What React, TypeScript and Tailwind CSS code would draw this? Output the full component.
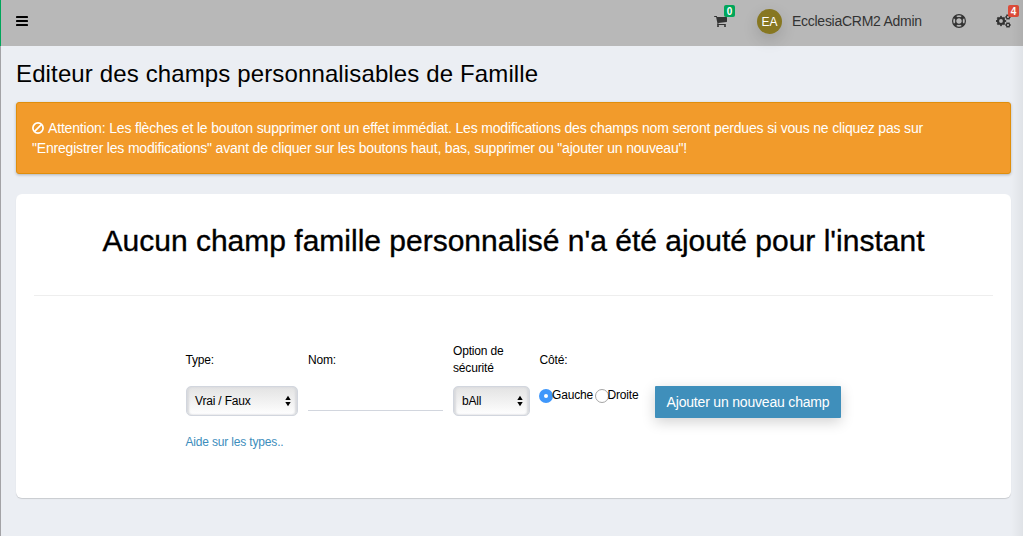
import React from "react";

function Select({ label, className }: { label: string; className: string }) {
  return (
    <button
      type="button"
      className={`flex h-[30px] items-center justify-between rounded-[5px] border border-[#d2d6de] bg-linear-to-b from-[#e3e3e3] to-white pr-[6px] pl-2 text-xs tracking-[-0.18px] text-black shadow-[inset_2px_0_2px_#d8dadd,inset_-2px_0_2px_#d8dadd] ${className}`}
    >
      <span>{label}</span>
      <svg width="6" height="12" viewBox="0 0 6 12" fill="#000">
        <path d="M3 .8 5.7 5H.3zM3 11.2.3 7h5.4z" />
      </svg>
    </button>
  );
}

function Radio({ label, checked, className }: { label: string; checked?: boolean; className: string }) {
  return (
    <label className="flex items-start text-xs leading-[17px]">
      <span
        className={`mt-[3px] flex size-[14px] shrink-0 items-center justify-center rounded-full ${
          checked ? "bg-[#3f97fb]" : "border border-[#a5a5a5] bg-white"
        }`}
      >
        {checked && <span className="size-1 rounded-full bg-white" />}
      </span>
      <span className={className}>{label}</span>
    </label>
  );
}

function Bars() {
  return (
    <svg width="12" height="10" viewBox="0 0 12 10" fill="#000">
      <rect width="12" height="2" rx=".4" />
      <rect y="4" width="12" height="2" rx=".4" />
      <rect y="8" width="12" height="2" rx=".4" />
    </svg>
  );
}

function Cart() {
  return (
    <svg width="14" height="14" viewBox="0 0 1792 1792" fill="currentColor">
      <path d="M640 1536q0 52-38 90t-90 38-90-38-38-90 38-90 90-38 90 38 38 90zm896 0q0 52-38 90t-90 38-90-38-38-90 38-90 90-38 90 38 38 90zm128-1088v512q0 24-16.5 42.5t-40.5 21.5l-1044 122q13 60 13 70 0 16-24 64h920q26 0 45 19t19 45-19 45-45 19h-1024q-26 0-45-19t-19-45q0-11 8-31.5t16-36 21.5-40 15.5-29.5l-177-823h-204q-26 0-45-19t-19-45 19-45 45-19h256q16 0 28.5 6.5t19.5 15.5 13 24.5 8 26 5.5 29.5 4.5 26h1201q26 0 45 19t19 45z" />
    </svg>
  );
}

function LifeRing() {
  return (
    <svg width="14" height="14" viewBox="0 0 14 14" fill="none" stroke="#333">
      <circle cx="7" cy="7" r="6.4" strokeWidth="1.2" />
      <circle cx="7" cy="7" r="3.3" strokeWidth="1.2" />
      <path d="m2.6 2.6 2.2 2.2M11.4 2.6 9.2 4.8M2.6 11.4l2.2-2.2M11.4 11.4 9.2 9.2" strokeWidth="3.2" />
    </svg>
  );
}

function Cogs() {
  return (
    <svg width="15" height="14" viewBox="0 0 15 14" fill="none" stroke="#333">
      <circle cx="5" cy="7" r="3" strokeWidth="2.2" />
      <circle cx="5" cy="7" r="4.4" strokeWidth="1.6" pathLength="16" strokeDasharray="1 1" strokeDashoffset=".5" />
      <circle cx="12" cy="3" r="1.7" strokeWidth="1.2" />
      <circle cx="12" cy="3" r="2.5" strokeWidth="1" pathLength="12" strokeDasharray="1 1" strokeDashoffset=".5" />
      <circle cx="12" cy="11" r="1.7" strokeWidth="1.2" />
      <circle cx="12" cy="11" r="2.5" strokeWidth="1" pathLength="12" strokeDasharray="1 1" strokeDashoffset=".5" />
    </svg>
  );
}

export default function App() {
  return (
    <div className="relative flex h-[536px] w-[1023px] overflow-hidden bg-[#ebeef3] font-['Liberation_Sans',Arial,sans-serif] text-black">
      <div className="flex w-px flex-col">
        <div className="h-[46px] bg-[#00a65a]" />
        <div className="flex-1 bg-[#a3a3a6]" />
      </div>
      <div className="flex flex-1 flex-col">
        <header className="flex h-[46px] items-center bg-[#b8b8b8] pb-1 pl-[15px] text-[#333]">
          <Bars />
          <div className="relative ml-auto">
            <Cart />
            <span className="absolute -top-[9px] left-[10px] flex h-3 w-[11px] items-center justify-center rounded-[2px] bg-[#00a65a] text-[10px] font-bold text-white">0</span>
          </div>
          <div className="mt-px ml-[29px] flex size-[25px] items-center justify-center rounded-full bg-[#877721] text-xs text-white shadow-[0_6px_16px_rgba(0,0,0,0.14)]">EA</div>
          <span className="ml-[10px] w-[131px] text-sm tracking-[-0.27px] whitespace-nowrap">EcclesiaCRM2 Admin</span>
          <div className="ml-[29px]"><LifeRing /></div>
          <div className="relative mr-[12px] ml-[30px]">
            <Cogs />
            <span className="absolute -top-[9px] left-[12px] flex h-3 w-[11px] items-center justify-center rounded-[2px] bg-[#dd4b39] text-[10px] font-bold text-white">4</span>
          </div>
        </header>
        <main className="flex flex-col pr-3 pl-[15px]">
          <h1 className="mt-[14px] h-[42px] text-2xl leading-7 tracking-[0.13px]">Editeur des champs personnalisables de Famille</h1>
          <div className="h-[72px] rounded-[3px] border border-[#e08e0b] bg-[#f29b2b] px-[15px] pt-[15px] text-sm leading-5 tracking-[-0.17px] whitespace-nowrap text-white shadow-[0_1px_3px_rgba(0,0,0,0.25)]">
            <div className="flex items-center">
              <svg className="mr-1" width="12" height="12" viewBox="0 0 12 12" fill="none" stroke="#fff" strokeWidth="1.7">
                <circle cx="6" cy="6" r="5.1" />
                <path d="m2.4 9.6 7.2-7.2" />
              </svg>
              <span>Attention: Les flèches et le bouton supprimer ont un effet immédiat. Les modifications des champs nom seront perdues si vous ne cliquez pas sur</span>
            </div>
            <div className="tracking-[-0.19px]">"Enregistrer les modifications" avant de cliquer sur les boutons haut, bas, supprimer ou "ajouter un nouveau"!</div>
          </div>
          <section className="mt-5 h-[304px] rounded-md bg-white px-[18px] shadow-[0_1px_1px_rgba(0,0,0,0.15)]">
            <h2 className="flex h-[102px] justify-center border-b border-[#eee] pt-[29px] text-[30px] leading-9 whitespace-nowrap [-webkit-text-stroke:0.35px_black]">Aucun champ famille personnalisé n'a été ajouté pour l'instant</h2>
            <form className="mt-[46px] ml-[152px] grid grid-cols-[122px_145px_86px_116px_186px] grid-rows-[44px_48px_20px] text-xs leading-[17px] tracking-[-0.17px]">
              <label className="-ml-[0.5px] pt-[10px]">Type:</label>
              <label className="pt-[10px]">Nom:</label>
              <label className="w-16 pt-px">Option de sécurité</label>
              <span className="pt-[10px] pl-[0.5px]">Côté:</span>
              <span />
              <Select label="Vrai / Faux" className="w-28" />
              <input aria-label="Nom" className="h-[25px] w-[135px] border-b border-[#d2d6de] outline-none" />
              <Select label="bAll" className="w-[77px]" />
              <div className="flex">
                <Radio label="Gauche" checked className="-ml-px w-[43px] pt-px" />
                <Radio label="Droite" className="-ml-[1.5px] pt-px" />
              </div>
              <button type="button" className="h-8 rounded-[1px] bg-[#3f8fbb] text-sm tracking-[-0.19px] whitespace-nowrap text-white shadow-[0_4px_14px_rgba(0,0,0,0.18)]">Ajouter un nouveau champ</button>
              <a href="#" className="-ml-[0.5px] text-[#3c8dbc]">Aide sur les types..</a>
            </form>
          </section>
        </main>
      </div>
      <div className="absolute top-0 right-0 h-full w-3 bg-linear-to-l from-black/5 to-transparent" />
    </div>
  );
}
